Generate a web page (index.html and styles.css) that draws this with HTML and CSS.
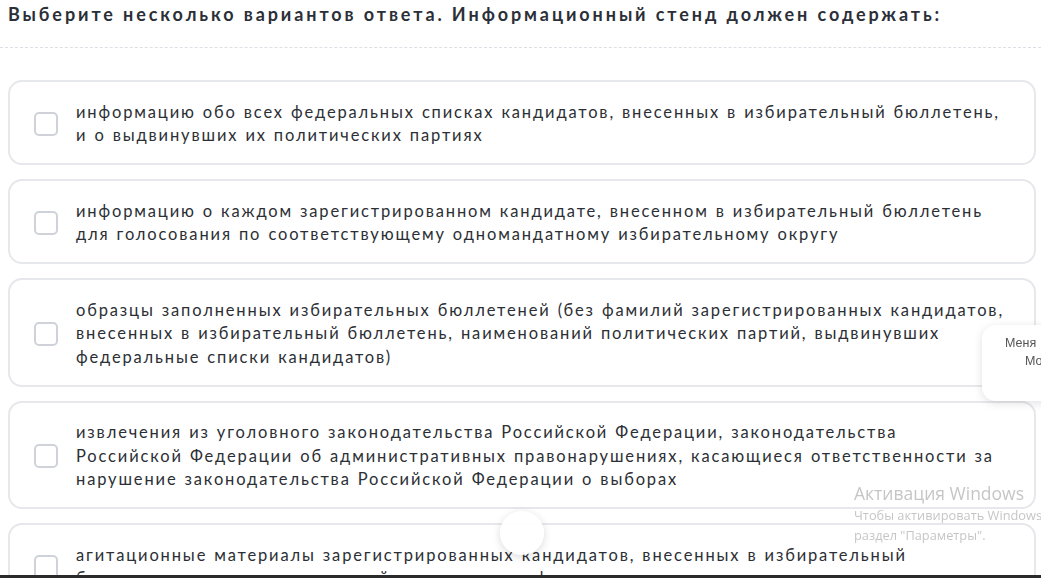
FILE: index.html
```html
<!DOCTYPE html>
<html lang="ru">
<head>
  <meta charset="UTF-8">
  <title>Вопрос</title>
  <link rel="stylesheet" href="styles.css">
</head>
<body>

  <div class="question">
    <h2 class="question-title">Выберите несколько вариантов ответа. Информационный стенд должен содержать:</h2>
    <div class="divider"></div>

    <div class="answers">
      <label class="answer">
        <span class="check"></span>
        <span class="answer-text">информацию обо всех федеральных списках кандидатов, внесенных в избирательный бюллетень, и о выдвинувших их политических партиях</span>
      </label>
      <label class="answer">
        <span class="check"></span>
        <span class="answer-text">информацию о каждом зарегистрированном кандидате, внесенном в избирательный бюллетень для голосования по соответствующему одномандатному избирательному округу</span>
      </label>
      <label class="answer">
        <span class="check"></span>
        <span class="answer-text">образцы заполненных избирательных бюллетеней (без фамилий зарегистрированных кандидатов, внесенных в избирательный бюллетень, наименований политических партий, выдвинувших федеральные списки кандидатов)</span>
      </label>
      <label class="answer">
        <span class="check"></span>
        <span class="answer-text">извлечения из уголовного законодательства Российской Федерации, законодательства Российской Федерации об административных правонарушениях, касающиеся ответственности за нарушение законодательства Российской Федерации о выборах</span>
      </label>
      <label class="answer">
        <span class="check"></span>
        <span class="answer-text">агитационные материалы зарегистрированных кандидатов, внесенных в избирательный бюллетень, политических партий, выдвинувших федеральные списки кандидатов</span>
      </label>
    </div>
  </div>

  <!-- floating stuff over the page -->
  <div class="side-widget">
    <div class="side-line1">Меня</div>
    <div class="side-line2">Мо</div>
  </div>

  <div class="drag-dot"></div>

  <div class="win-watermark">
    <div class="win-big">Активация Windows</div>
    <div class="win-small">Чтобы активировать Windows, перейдите в</div>
    <div class="win-small">раздел "Параметры".</div>
  </div>

  <div class="bottom-bar"></div>

</body>
</html>
```

FILE: styles.css
```css
body {
    margin: 0;
    background-color: #ffffff;
    font-family: Lato, "Open Sans", sans-serif;
    overflow: hidden;
    height: 578px;
}

.question {
    padding: 0 5px 0 8px;
}

.question-title {
    margin: 0;
    padding-top: 1px;
    font-size: 18px;
    line-height: 26px;
    font-weight: 700;
    letter-spacing: 2.9px;
    color: #2b2f38;
    white-space: nowrap;
}

.divider {
    margin: 20px -5px 0 -8px;
    height: 0;
    border-top: 1px dashed #dcdfe4;
}

.answers {
    display: flex;
    flex-direction: column;
    gap: 14px;
    margin-top: 32px;
}

.answer {
    display: flex;
    align-items: center;
    gap: 18px;
    padding: 18.5px 26px 15.5px 24px;
    border: 2px solid #e6e8ec;
    border-radius: 14px;
    background-color: #fff;
    cursor: pointer;
}

.check {
    flex-shrink: 0;
    width: 20px;
    height: 20px;
    border: 2px solid #cfd3d9;
    border-radius: 5px;
    background-color: #fff;
}

.answer-text {
    font-size: 16.5px;
    line-height: 23.5px;
    letter-spacing: 1.85px;
    word-spacing: 1px;
    color: #2c2f35;
}

.side-widget {
    position: fixed;
    left: 982px;
    top: 325px;
    width: 120px;
    height: 76px;
    background-color: #fff;
    border-radius: 14px;
    box-shadow: 0 2px 10px rgba(0, 0, 0, 0.12);
    font-family: "Liberation Sans", Arial, sans-serif;
    font-size: 12.5px;
    color: #555;
}

.side-line1 {
    padding: 11px 0 0 23px;
}

.side-line2 {
    padding: 4px 0 0 43px;
}

.drag-dot {
    position: fixed;
    left: 500px;
    top: 511px;
    width: 44px;
    height: 44px;
    border-radius: 50%;
    background-color: rgba(255, 255, 255, 0.92);
    box-shadow: 0 2px 8px rgba(0, 0, 0, 0.15);
}

.win-watermark {
    position: fixed;
    left: 854px;
    top: 481px;
    font-family: "Open Sans", "Liberation Sans", sans-serif;
    color: rgba(150, 150, 150, 0.55);
    white-space: nowrap;
    pointer-events: none;
}

.win-big {
    font-size: 17.5px;
    line-height: 24px;
}

.win-small {
    font-size: 12.8px;
    line-height: 20px;
}

.bottom-bar {
    position: fixed;
    left: 0;
    right: 0;
    bottom: 0;
    height: 3px;
    background-color: #2a2a2a;
}
```
